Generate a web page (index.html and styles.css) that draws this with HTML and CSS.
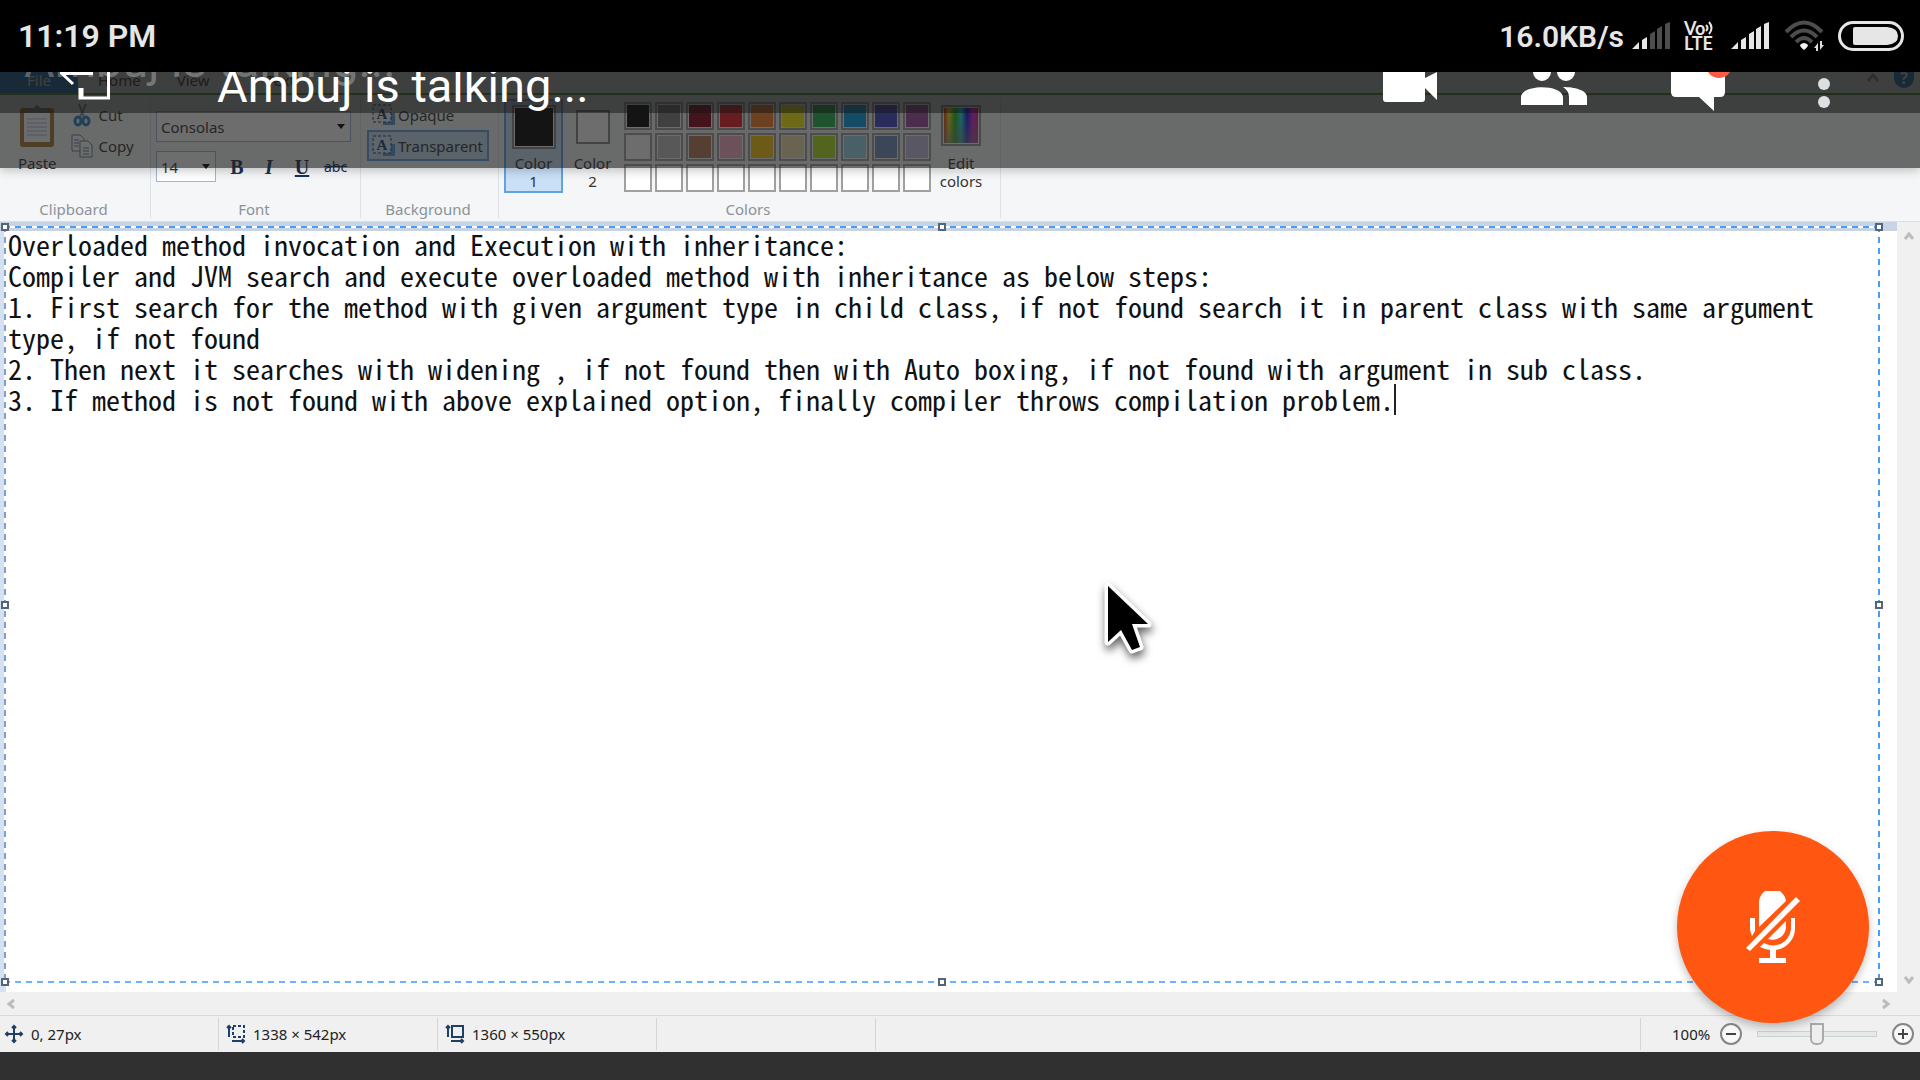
FILE: index.html
```
<!DOCTYPE html>
<html lang="en">
<head>
<meta charset="utf-8">
<title>Ambuj is talking…</title>
<link rel="stylesheet" href="styles.css">
</head>
<body>
<div class="phone">
  <header class="system-bar">
    <time class="clock">11:19 PM</time>
    <div class="indicators">
      <span class="speed">16.0KB/s</span>
      <svg class="signal" viewBox="0 0 38 28"><path d="M0 27L7 20V27ZM10 18l5-3v12h-5Z" fill="#e6e6e6"/><path d="M18 12l5-3v18h-5ZM25 7l5-3v23h-5ZM33 2l5-2v27h-5Z" fill="#4d4d4d"/></svg>
      <span class="volte"><span class="vo">Vo<svg viewBox="0 0 8 14"><path d="M1 4q3 3 0 6M4 1q5 6 0 12" fill="none" stroke="#e6e6e6" stroke-width="2"/></svg></span><span>LTE</span></span>
      <svg class="signal" viewBox="0 0 38 28"><path d="M0 27L7 20V27ZM10 18l5-3v12h-5ZM18 12l5-3v18h-5ZM25 7l5-3v23h-5ZM33 2l5-2v27h-5Z" fill="#e6e6e6"/></svg>
      <svg class="wifi" viewBox="0 0 42 32"><g fill="none" stroke="#4d4d4d" stroke-width="4"><path d="M2 12Q20-7 38 12"/><path d="M7 17Q20 4 33 17"/><path d="M12 22Q20 14 28 22"/></g><path d="M16 25q4-4 8 0q0 2-4 5q-4-3-4-5Z" fill="#f2f2f2"/><path d="M30 28l4-5v8h-2v-3ZM36 21v9l4-5h-2v-4Z" fill="#ddd"/></svg>
      <svg class="battery" viewBox="0 0 66 30"><rect x="1.500" y="1.500" width="63" height="27" rx="13.500" fill="none" stroke="#e6e6e6" stroke-width="3"/><path d="M17 6H49Q60 7 60 15T49 24H17Q15 24 15 22V8Q15 6 17 6Z" fill="#e6e6e6"/></svg>
    </div>
  </header>

  <main class="share">
    <header class="call-bar">
      <div class="call-top">
        <span class="ghost" aria-hidden="true">Ambuj is talking...</span>
        <button class="exit" aria-label="Leave"><svg viewBox="0 0 50 42"><path d="M33 1.500H2L13 12M20 16V26H48.500V0M22 16V26" fill="none" stroke="#fff" stroke-width="3"/></svg></button>
        <h1 class="talker">Ambuj is talking...</h1>
        <div class="call-actions">
          <button aria-label="Video"><svg class="i-video" viewBox="0 0 54 41"><path d="M0 0H42V6L54 0V28L42 16V27Q42 30 39 30H3Q0 30 0 27Z" fill="#fff"/></svg></button>
          <button aria-label="Participants"><svg class="i-people" viewBox="0 0 66 41"><path d="M12 0a9 9 0 0 0 18 0ZM36 0a9 9 0 0 0 18 0ZM0 33V25C1 12 41 12 42 25V33ZM48 33V25Q48 19 42 15C53 15 66 18 66 25V33Z" fill="#fff"/></svg></button>
          <button aria-label="Chat"><svg class="i-chat" viewBox="0 0 60 41"><path d="M0 0H54V20Q54 25 49 25H43V39L28 25H5Q0 25 0 20Z" fill="#fff"/><circle cx="48" cy="-7" r="13" fill="#ff5a44"/></svg></button>
          <button aria-label="More"><svg class="i-more" viewBox="0 0 12 41"><circle cx="6" cy="12" r="6" fill="#dce0e3"/><circle cx="6" cy="30" r="6" fill="#dce0e3"/></svg></button>
        </div>
      </div>
    </header>

    <section class="paint">
      <nav class="tabs">
        <button class="tab file">File</button><button class="tab home">Home</button><button class="tab view">View</button><button class="tab text">Text</button>
        <span class="tab-tools"><svg class="up" viewBox="0 0 14 10"><path d="M2 9L7 3L12 9" fill="none" stroke="#999" stroke-width="3"/></svg><span class="help">?</span></span>
      </nav>
      <div class="ribbon">
        <section class="group g-clip">
          <div class="tools">
            <button class="paste"><svg viewBox="0 0 36 44"><rect x="1" y="4" width="34" height="39" rx="3" fill="#a87632"/><rect x="5" y="9" width="26" height="29" fill="#f8fbff"/><path d="M8 15H28M8 19H28M8 23H28M8 27H28M8 31H28" stroke="#a9bed4"/><path d="M10 9V4H15Q18-2 21 4H26V9Z" fill="#7c8288"/></svg>Paste</button>
            <div class="stack">
              <button class="row-tool"><svg viewBox="0 0 22 24"><path d="M8 1l5 13M15 1L9 14" stroke="#7892ad" stroke-width="2"/><g fill="none" stroke="#2a7fc0" stroke-width="3"><ellipse cx="7" cy="18" rx="3" ry="4"/><ellipse cx="15" cy="18" rx="3" ry="4"/></g></svg>Cut</button>
              <button class="row-tool"><svg viewBox="0 0 22 24"><g fill="#fff" stroke="#6f7f90" stroke-width="1"><path d="M1 1H9L13 5V17H1Z"/><path d="M9 7H17L21 11V23H9Z"/></g><path d="M3 6H8M3 9H8M3 12H8M12 14H18M12 17H18M12 20H18" stroke="#4a7aae"/></svg>Copy</button>
            </div>
          </div>
          <h2>Clipboard</h2>
        </section>
        <section class="group g-font">
          <div class="tools font-tools">
            <label class="combo family"><select aria-label="Font family"><option>Consolas</option></select><svg viewBox="0 0 8 5"><path d="M0 0H8L4 5Z"/></svg></label>
            <div class="format">
              <label class="combo size"><select aria-label="Font size"><option>14</option></select><svg viewBox="0 0 8 5"><path d="M0 0H8L4 5Z"/></svg></label>
              <button class="b">B</button><button class="i">I</button><button class="u">U</button><button class="s">abc</button>
            </div>
          </div>
          <h2>Font</h2>
        </section>
        <section class="group g-back">
          <div class="tools back-tools">
            <button class="mode"><svg viewBox="0 0 24 22"><rect x="11" y="9" width="12" height="12" fill="#4d9be0"/><rect x="1" y="1" width="18" height="17" fill="#eef4fa" stroke="#1c3f66" stroke-dasharray="3 2"/><text x="10" y="15" text-anchor="middle" class="glyph">A</text></svg>Opaque</button>
            <button class="mode on"><svg viewBox="0 0 24 22"><rect x="11" y="9" width="12" height="12" fill="#4d9be0"/><rect x="1" y="1" width="18" height="17" fill="#d7e9fb" stroke="#1c3f66" stroke-dasharray="3 2"/><text x="10" y="15" text-anchor="middle" class="glyph">A</text></svg>Transparent</button>
          </div>
          <h2>Background</h2>
        </section>
        <section class="group g-colors">
          <div class="tools color-tools">
            <button class="slot on"><span class="well big"></span><span>Color<br>1</span></button>
            <button class="slot two"><span class="well small"></span><span>Color<br>2</span></button>
            <div class="palette">
              <button class="c1" aria-label="Black"></button><button class="c2" aria-label="Gray"></button><button class="c3" aria-label="Dark red"></button><button class="c4" aria-label="Red"></button><button class="c5" aria-label="Orange"></button><button class="c6" aria-label="Yellow"></button><button class="c7" aria-label="Green"></button><button class="c8" aria-label="Turquoise"></button><button class="c9" aria-label="Indigo"></button><button class="c10" aria-label="Purple"></button>
              <button aria-label="White"></button><button class="c12" aria-label="Light gray"></button><button class="c13" aria-label="Brown"></button><button class="c14" aria-label="Rose"></button><button class="c15" aria-label="Gold"></button><button class="c16" aria-label="Light yellow"></button><button class="c17" aria-label="Lime"></button><button class="c18" aria-label="Light turquoise"></button><button class="c19" aria-label="Blue gray"></button><button class="c20" aria-label="Lavender"></button>
              <button aria-label="Empty 1"></button><button aria-label="Empty 2"></button><button aria-label="Empty 3"></button><button aria-label="Empty 4"></button><button aria-label="Empty 5"></button><button aria-label="Empty 6"></button><button aria-label="Empty 7"></button><button aria-label="Empty 8"></button><button aria-label="Empty 9"></button><button aria-label="Empty 10"></button>
            </div>
            <button class="edit"><span class="spectrum"></span><span>Edit<br>colors</span></button>
          </div>
          <h2>Colors</h2>
        </section>
      </div>

      <div class="workspace">
        <div class="canvas">
          <div class="note" role="textbox" aria-multiline="true" aria-label="Canvas text">
            <p>Overloaded method invocation and Execution with inheritance:</p>
            <p>Compiler and JVM search and execute overloaded method with inheritance as below steps:</p>
            <p>1. First search for the method with given argument type in child class, if not found search it in parent class with same argument type, if not found</p>
            <p>2. Then next it searches with widening , if not found then with Auto boxing, if not found with argument in sub class.</p>
            <p>3. If method is not found with above explained option, finally compiler throws compilation problem.<span class="caret"></span></p>
          </div>
          <div class="selection"><i class="nw"></i><i class="n"></i><i class="ne"></i><i class="w"></i><i class="e"></i><i class="sw"></i><i class="s-mid"></i><i class="se"></i></div>
          <svg class="pointer" viewBox="0 0 56 80"><path d="M8 6V62L21 50L32 70L40 67L32 44H48Z" fill="#000" stroke="#fff" stroke-width="7" stroke-linejoin="round" paint-order="stroke"/></svg>
        </div>
        <div class="vscroll">
          <button aria-label="Scroll up"><svg viewBox="0 0 12 12"><path d="M2 9L6 4L10 9" /></svg></button>
          <button aria-label="Scroll down"><svg viewBox="0 0 12 12"><path d="M2 3L6 8L10 3"/></svg></button>
        </div>
        <div class="hscroll">
          <button aria-label="Scroll left"><svg viewBox="0 0 12 12"><path d="M8 2L3 6L8 10"/></svg></button>
          <button aria-label="Scroll right"><svg viewBox="0 0 12 12"><path d="M4 2L9 6L4 10"/></svg></button>
        </div>
      </div>

      <footer class="status">
        <div class="cell"><svg viewBox="0 0 18 18"><path d="M9 1V17M1 9H17M7 3L9 1L11 3M7 15L9 17L11 15M3 7L1 9L3 11M15 7L17 9L15 11"/></svg>0, 27px</div>
        <div class="cell"><svg viewBox="0 0 18 18"><path d="M2 1V12M0 3L2 1L4 3M5 16H17M15 14L17 16L15 18"/><path d="M6 1H17V12H6Z" stroke-dasharray="3 2"/></svg>1338 × 542px</div>
        <div class="cell"><svg viewBox="0 0 18 18"><path d="M2 1V12M0 3L2 1L4 3M5 16H17M15 14L17 16L15 18M6 1H17V12H6Z"/></svg>1360 × 550px</div>
        <div class="cell"></div>
        <div class="cell rest"></div>
        <div class="zoom">
          <label for="zoom">100%</label>
          <button class="round" aria-label="Zoom out"><svg viewBox="0 0 12 12"><path d="M1 6H11"/></svg></button>
          <input id="zoom" type="range" min="0" max="100" value="50">
          <button class="round" aria-label="Zoom in"><svg viewBox="0 0 12 12"><path d="M1 6H11M6 1V11"/></svg></button>
        </div>
      </footer>
    </section>
  </main>
  <div class="base"></div>
  <button class="mute" aria-label="Unmute"><svg viewBox="0 0 54 72"><path d="M13 36V13a13.500 13.500 0 0 1 27-3ZM22 48L40 30V37a13.500 13.500 0 0 1-18 11ZM4 27H9V40L6 45Q4 41 4 37ZM45 27H49V37A22 22 0 0 1 30 59V67H40V72H13V67H24V59Q18 58 14 56L18 52A18 18 0 0 0 45 37ZM0 57L50 6L54 10L4 60Z" fill="#fff"/></svg></button>
</div>
</body>
</html>
```

FILE: styles.css
```
* { box-sizing: border-box; }
body { margin: 0; font-family: "Noto Sans", "Open Sans", sans-serif; font-size: 16px; color: #333; }
button { border: 0; padding: 0; margin: 0; background: none; font: inherit; color: inherit; }
svg { display: block; flex: none; }
h1, h2, p { margin: 0; font-weight: 400; }

.phone { position: relative; display: flex; flex-direction: column; min-height: 100vh; background: #303030; }

.system-bar { display: flex; align-items: center; justify-content: space-between; height: 72px; padding: 0 16px 0 18px; background: #000; color: #e6e6e6; font-family: Roboto, sans-serif; font-size: 32px; font-weight: 600; }
.indicators { display: flex; align-items: center; }
.speed { font-size: 30px; margin-right: 8px; }
.signal { width: 38px; height: 28px; }
.volte { display: flex; flex-direction: column; width: 32px; margin: 0 15px 0 14px; font-family: Lato, sans-serif; font-size: 18px; font-weight: 700; line-height: 15px; }
.vo { display: flex; }
.vo svg { width: 8px; height: 14px; }
.wifi { width: 42px; height: 32px; margin: 0 12px 0 15px; }
.battery { width: 66px; height: 30px; }

.share { position: relative; display: flex; flex: 1; flex-direction: column; }
.base { height: 28px; background: #303030; }

.call-bar { position: absolute; z-index: 3; top: 0; left: 0; right: 0; height: 96px; background: rgba(31, 31, 31, .65); box-shadow: 0 2px 10px rgba(0, 0, 0, .25); }
.call-top { position: relative; display: flex; height: 41px; padding: 0 90px 0 60px; background: rgba(20, 20, 20, .5); clip-path: inset(0); font-family: Roboto, sans-serif; color: #fff; }
.ghost { position: absolute; left: 24px; top: -35px; font-size: 47px; line-height: 48px; color: rgba(255, 255, 255, .3); }
.exit { align-self: flex-start; }
.exit svg { width: 50px; height: 42px; }
.talker { margin: -10px auto 0 107px; font-size: 47px; line-height: 48px; }
.call-actions { display: flex; align-items: flex-start; }
.call-actions svg { height: 41px; }
.i-video { width: 54px; margin-right: 84px; }
.i-people { width: 66px; margin-right: 84px; }
.i-chat { width: 60px; margin-right: 87px; }
.i-more { width: 12px; }

.paint { display: flex; flex: 1; flex-direction: column; background: #f4f6f7; }
.tabs { display: flex; height: 23px; border-bottom: 2px solid #4d9e2c; }
.tab { height: 21px; line-height: 16px; padding-bottom: 5px; font-size: 15px; }
.file { width: 78px; background: #1979ca; color: #fff; }
.home { margin-left: 20px; }
.view { margin-left: 36px; }
.text { width: 90px; margin-left: 26px; background: #e4f2de; }
.tab-tools { display: flex; margin-left: auto; padding-right: 6px; gap: 14px; }
.up { width: 14px; height: 10px; }
.help { width: 20px; height: 16px; border-radius: 0 0 10px 10px; background: #1979ca; color: #fff; text-align: center; line-height: 12px; font-weight: 700; }

.ribbon { display: flex; height: 127px; padding-top: 4px; border-bottom: 1px solid #dcdfe2; }
.group { display: flex; flex-direction: column; height: 119px; border-right: 1px solid #dfe2e4; }
.group h2 { margin-top: auto; height: 18px; padding-right: 3px; font-size: 15px; line-height: 18px; text-align: center; color: #8b9299; }
.tools { display: flex; height: 94px; font-size: 15px; line-height: 18px; }
.g-clip { width: 151px; }
.g-font { width: 210px; }
.g-back { width: 138px; }
.g-colors { width: 502px; }
.paste { display: flex; flex-direction: column; align-items: center; gap: 6px; height: 73px; margin: 5px 0 0 18px; }
.paste svg { width: 36px; height: 44px; }
.stack { display: flex; flex-direction: column; gap: 7px; margin: 4px 0 0 14px; }
.row-tool { display: flex; align-items: center; gap: 6px; height: 24px; }
.row-tool svg { width: 22px; height: 24px; }
.font-tools { flex-direction: column; gap: 9px; padding: 12px 0 0 5px; }
.combo { position: relative; display: block; height: 31px; }
.combo select { appearance: none; width: 100%; height: 31px; padding: 0 4px; border: 1px solid #a4b4d4; border-radius: 0; background: #fff; color: #333; font: inherit; }
.combo svg { position: absolute; right: 6px; top: 13px; width: 8px; height: 5px; }
.family { width: 195px; }
.size { width: 60px; }
.format { display: flex; align-items: center; font-family: "Liberation Serif", serif; font-size: 20px; color: #1c2f55; }
.format label { font-family: "Noto Sans", sans-serif; font-size: 15px; }
.b { width: 42px; font-weight: 700; }
.i { width: 22px; font-weight: 700; font-style: italic; }
.u { width: 44px; font-weight: 700; text-decoration: underline; }
.s { font-family: "Noto Sans", sans-serif; font-size: 14px; text-decoration: line-through; }
.back-tools { flex-direction: column; padding-left: 6px; }
.mode { display: flex; align-items: center; gap: 2px; width: 122px; height: 31px; padding-left: 4px; border: 1px solid transparent; white-space: nowrap; }
.mode svg { width: 24px; height: 22px; }
.mode.on { border: 2px solid #62a2e4; background: #c9e0f7; padding-left: 3px; }
.glyph { font: 700 15px "Liberation Serif", serif; fill: #1c3f66; }
.color-tools { padding-left: 5px; }
.slot { display: flex; flex-direction: column; align-items: center; justify-content: space-between; width: 59px; height: 94px; padding-bottom: 3px; }
.slot.on { padding: 4px 0 1px; border: 2px solid #62a2e4; background: #c9e0f7; }
.slot.two { padding-top: 11px; }
.well { border: 2px solid #868686; }
.big { width: 44px; height: 44px; background: #000; box-shadow: inset 0 0 0 1px #fff; }
.small { width: 34px; height: 34px; background: #fff; }
.palette { display: grid; grid-template-columns: repeat(10, 28px); grid-auto-rows: 28px; gap: 3px; margin: 3px 0 0 2px; }
.palette button { border: 2px solid #a0a0a0; background: #fff; box-shadow: inset 0 0 0 1px #fff; }
.palette .c1 { background: #000; }
.palette .c2 { background: #7f7f7f; }
.palette .c3 { background: #880015; }
.palette .c4 { background: #ed1c24; }
.palette .c5 { background: #ff7f27; }
.palette .c6 { background: #fff200; }
.palette .c7 { background: #22b14c; }
.palette .c8 { background: #00a2e8; }
.palette .c9 { background: #3f48cc; }
.palette .c10 { background: #a349a4; }
.palette .c12 { background: #c3c3c3; }
.palette .c13 { background: #b97a57; }
.palette .c14 { background: #ffaec9; }
.palette .c15 { background: #ffc90e; }
.palette .c16 { background: #efe4b0; }
.palette .c17 { background: #b5e61d; }
.palette .c18 { background: #99d9ea; }
.palette .c19 { background: #7092be; }
.palette .c20 { background: #c8bfe7; }
.edit { display: flex; flex-direction: column; align-items: center; justify-content: space-between; width: 60px; height: 94px; padding: 6px 0 3px; }
.spectrum { width: 40px; height: 41px; border: 2px solid #999; box-shadow: inset 0 0 0 1px #fff; background: linear-gradient(transparent, rgba(128, 128, 128, .7)), linear-gradient(90deg, red, #ff0, #0c0, #0ff, #00f, #f0f, #f04); }

.workspace { display: grid; flex: 1; grid-template-columns: 1fr 23px; grid-template-rows: 1fr 23px; background: #f0f0f0; }
.canvas { position: relative; background: linear-gradient(#c8d3e3, #c8d3e3) top / 100% 9px no-repeat, linear-gradient(#d5e1f1, #d5e1f1) left / 6px 100% no-repeat, #fff; }
.note { padding: 7px 24px 0 8px; color: #111; font-family: "Noto Sans Mono CJK SC", "Noto Sans Mono CJK JP", "DejaVu Sans Mono", monospace; font-size: 28px; line-height: 31px; }
.caret { display: inline-block; width: 2px; height: 31px; background: #222; vertical-align: top; }
.selection { position: absolute; inset: 4px 17px 9px 4px; background: repeating-linear-gradient(90deg, #4a9df5 0 6px, #fff 6px 11px) top / 100% 2px no-repeat, repeating-linear-gradient(90deg, #6db2fa 0 6px, #fff 6px 11px) bottom / 100% 2px no-repeat, repeating-linear-gradient(#7f9fc9 0 6px, #fff 6px 11px) left / 2px 100% no-repeat, repeating-linear-gradient(#4a9df5 0 6px, #fff 6px 11px) right / 2px 100% no-repeat; }
.selection i { position: absolute; width: 8px; height: 8px; border: 2px solid #53657a; background: #fff; }
.nw, .n, .ne { top: -3px; }
.w, .e { top: calc(50% - 4px); }
.sw, .s-mid, .se { bottom: -3px; }
.nw, .w, .sw { left: -3px; }
.n, .s-mid { left: calc(50% - 4px); }
.ne, .e, .se { right: -3px; }
.pointer { position: absolute; left: 58%; top: 358px; width: 56px; height: 80px; overflow: visible; filter: drop-shadow(1px 5px 4px rgba(0, 0, 0, .6)); }
.vscroll { display: flex; flex-direction: column; align-items: center; justify-content: space-between; padding: 8px 0 6px; }
.hscroll { display: flex; align-items: center; justify-content: space-between; padding: 0 6px; }
.vscroll svg, .hscroll svg { width: 12px; height: 12px; fill: none; stroke: #bcbcbc; stroke-width: 3; }

.status { display: flex; height: 37px; border-top: 1px solid #d9d9d9; background: #f0f0f0; font-size: 16px; color: #222; }
.cell { display: flex; align-items: center; gap: 8px; width: 219px; margin: 2px 0; padding-left: 5px; border-right: 1px solid #d5d5d5; font-size: 15px; }
.cell + .cell { padding-left: 8px; }
.cell svg { width: 18px; height: 18px; overflow: visible; fill: none; stroke: #1e3f66; stroke-width: 2; }
.rest { flex: 1; }
.zoom { display: flex; align-items: center; width: 279px; padding: 0 6px 0 31px; }
.zoom label { width: 48px; font-size: 15px; }
.round { display: flex; align-items: center; justify-content: center; flex: none; width: 22px; height: 22px; border: 2px solid #858585; border-radius: 50%; background: #f8f8f8; }
.round svg { width: 12px; height: 12px; stroke: #444; stroke-width: 2; }
.zoom input { appearance: none; flex: 1; min-width: 0; height: 24px; margin: 0 15px; background: linear-gradient(#e4e9e9, #e4e9e9) center / calc(100% - 2px) 4px no-repeat, linear-gradient(#ccd0d0, #ccd0d0) center / 100% 6px no-repeat; }
.zoom input::-webkit-slider-thumb { appearance: none; width: 14px; height: 22px; border: 2px solid #aaa; border-radius: 0 0 6px 6px; background: #eee; }

.mute { position: absolute; right: 51px; bottom: 57px; z-index: 4; display: flex; align-items: center; justify-content: center; width: 192px; height: 192px; border-radius: 50%; background: #ff5711; box-shadow: 0 4px 8px rgba(0, 0, 0, .25); }
.mute svg { width: 54px; height: 72px; }
```
